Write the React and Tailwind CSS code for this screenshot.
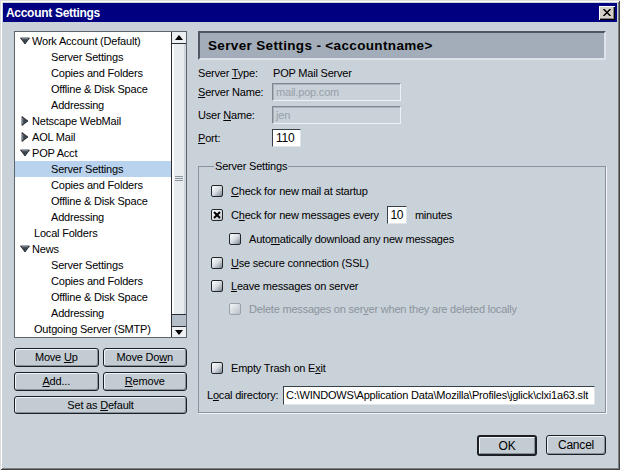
import React from "react";

const U = ({ children }) => <span className="underline underline-offset-[1px]">{children}</span>;

function Arrow({ dir }) {
  if (dir === "down")
    return (
      <svg width="10" height="8" viewBox="0 0 10 8" className="shrink-0">
        <path d="M0.5 1 L9.5 1 L5 7 Z" fill="#3c444c" stroke="#1e2226" strokeWidth="0.8" />
        <path d="M1.8 1.7 L8.2 1.7" stroke="#9aa4ae" strokeWidth="0.8" />
      </svg>
    );
  return (
    <svg width="8" height="10" viewBox="0 0 8 10" className="shrink-0">
      <path d="M1 0.5 L7 5 L1 9.5 Z" fill="#3c444c" stroke="#1e2226" strokeWidth="0.8" />
      <path d="M1.7 1.8 L1.7 8.2" stroke="#9aa4ae" strokeWidth="0.8" />
    </svg>
  );
}

const tree = [
  { t: "Work Account (Default)", p: "down" },
  { t: "Server Settings" },
  { t: "Copies and Folders" },
  { t: "Offline & Disk Space" },
  { t: "Addressing" },
  { t: "Netscape WebMail", p: "right" },
  { t: "AOL Mail", p: "right" },
  { t: "POP Acct", p: "down" },
  { t: "Server Settings", sel: true },
  { t: "Copies and Folders" },
  { t: "Offline & Disk Space" },
  { t: "Addressing" },
  { t: "Local Folders", p: "none" },
  { t: "News", p: "down" },
  { t: "Server Settings" },
  { t: "Copies and Folders" },
  { t: "Offline & Disk Space" },
  { t: "Addressing" },
  { t: "Outgoing Server (SMTP)", p: "none" },
];

function TreeRow({ item }) {
  const bg = item.sel ? "bg-[#b9d3ee]" : "";
  if (item.p === "down" || item.p === "right") {
    return (
      <div className={`h-[16px] flex items-center ${bg}`}>
        <div className="w-[17px] flex justify-center pl-[2px]">
          <Arrow dir={item.p} />
        </div>
        <span className="whitespace-nowrap">{item.t}</span>
      </div>
    );
  }
  if (item.p === "none") {
    return (
      <div className={`h-[16px] flex items-center pl-[19px] ${bg}`}>
        <span className="whitespace-nowrap">{item.t}</span>
      </div>
    );
  }
  return (
    <div className={`h-[16px] flex items-center pl-[36px] ${bg}`}>
      <span className="whitespace-nowrap">{item.t}</span>
    </div>
  );
}

function Btn({ children, className = "" }) {
  return (
    <div
      className={`h-[19px] flex items-center justify-center rounded-[3px] border border-[#1c2024] bg-[#c3cbd3] shadow-[inset_1px_1px_0_#f2f5f7,inset_-1px_-1px_0_#88919a] ${className}`}
    >
      <span className="whitespace-pre">{children}</span>
    </div>
  );
}

function Check({ checked, disabled }) {
  if (disabled)
    return (
      <span className="w-[12px] h-[12px] shrink-0 rounded-[2px] border border-[#9aa2aa] bg-gradient-to-br from-[#f4f6f8] to-[#b8c0c8]" />
    );
  if (checked)
    return (
      <span className="w-[12px] h-[12px] shrink-0 rounded-[2px] border border-[#22262a] bg-gradient-to-br from-white to-[#c0c6cc] flex items-center justify-center">
        <svg width="8" height="8" viewBox="0 0 8 8">
          <path d="M1 1 L7 7 M7 1 L1 7" stroke="#000" strokeWidth="2" />
        </svg>
      </span>
    );
  return (
    <span className="w-[12px] h-[12px] shrink-0 rounded-[2px] border border-[#22262a] bg-gradient-to-br from-white via-[#d8dde2] to-[#7e8893]" />
  );
}

export default function App() {
  return (
    <div className="w-[620px] h-[470px] bg-[#c9d1d9] p-[3px] flex flex-col text-[11px] leading-none tracking-[-0.2px] text-black font-['Liberation_Sans',Arial,sans-serif] shadow-[inset_1px_1px_0_#dcdcdc,inset_-1px_-1px_0_#404040,inset_2px_2px_0_#ffffff,inset_-2px_-2px_0_#808080]">
      {/* Title bar */}
      <div className="h-[19px] bg-[#000080] flex items-center justify-between pl-[3px] pr-[2px]">
        <span className="text-white font-bold text-[12px] tracking-[-0.3px]">Account Settings</span>
        <div className="w-[16px] h-[14px] bg-[#d4d0c8] flex items-center justify-center shadow-[inset_1px_1px_0_#ffffff,inset_-1px_-1px_0_#000000,inset_-2px_-2px_0_#808080]">
          <svg width="8" height="7" viewBox="0 0 8 7">
            <path d="M0.5 0 L7.5 7 M7.5 0 L0.5 7" stroke="#000" strokeWidth="1.5" />
          </svg>
        </div>
      </div>

      {/* Body */}
      <div className="flex pl-[11px] pt-[9px]">
        {/* Left column */}
        <div className="w-[173px] flex flex-col">
          <div className="h-[307px] border border-[#5c646c] bg-white flex">
            <div className="flex-1 pt-[1px] overflow-hidden">
              {tree.map((it, i) => (
                <TreeRow key={i} item={it} />
              ))}
            </div>
            <div className="w-[15px] flex flex-col border-l border-[#2a2e32]">
              <div className="h-[12px] bg-[#eef1f4] border-b border-[#2a2e32] flex items-center justify-center">
                <svg width="8" height="5" viewBox="0 0 8 5">
                  <path d="M0 5 L4 0 L8 5 Z" fill="#000" />
                </svg>
              </div>
              <div className="flex-1 bg-[#e8ecef] border-b border-[#2a2e32] flex items-center justify-center shadow-[inset_2px_0_0_#ffffff,inset_-2px_0_0_#ccd3da]">
                <svg width="8" height="6" viewBox="0 0 8 6">
                  <path d="M0 0.5 H8 M0 2.5 H8 M0 4.5 H8" stroke="#8d969f" strokeWidth="1" />
                </svg>
              </div>
              <div className="h-[11px] bg-[#b4bec8]" />
              <div className="h-[11px] bg-[#eef1f4] border-t border-[#2a2e32] flex items-center justify-center">
                <svg width="8" height="5" viewBox="0 0 8 5">
                  <path d="M0 0 L4 5 L8 0 Z" fill="#000" />
                </svg>
              </div>
            </div>
          </div>
          <div className="mt-[10px] grid grid-cols-2 gap-x-[4px] gap-y-[5px]">
            <Btn>
              Move <U>U</U>p
            </Btn>
            <Btn>
              Move Do<U>w</U>n
            </Btn>
            <Btn>
              <U>A</U>dd...
            </Btn>
            <Btn>
              <U>R</U>emove
            </Btn>
            <Btn className="col-span-2 !h-[18px]">
              Set as <U>D</U>efault
            </Btn>
          </div>
        </div>

        {/* Right column */}
        <div className="ml-[11px] w-[408px] flex flex-col">
          <div className="h-[29px] bg-[#a3adb9] border-2 border-[#4f5862] border-b-[#dde3e8] border-r-[#dde3e8] flex items-center pl-[8px]">
            <span className="font-bold text-[13.5px] tracking-[0.35px]">Server Settings - &lt;accountname&gt;</span>
          </div>

          <div className="mt-[4px] flex flex-col">
            <div className="h-[18px] flex items-center">
              <span className="w-[75px]">
                Server <U>T</U>ype:
              </span>
              <span>POP Mail Server</span>
            </div>
            <div className="mt-[1px] h-[18px] flex items-center">
              <span className="w-[74px]">
                <U>S</U>erver Name:
              </span>
              <div className="w-[129px] h-[18px] border border-[#7e8790] border-b-[#eef1f3] border-r-[#eef1f3] shadow-[inset_1px_1px_0_#a9b2bb] flex items-center pl-[3px] text-[#98a0a8]">
                mail.pop.com
              </div>
            </div>
            <div className="mt-[5px] h-[18px] flex items-center">
              <span className="w-[74px]">
                User <U>N</U>ame:
              </span>
              <div className="w-[129px] h-[18px] border border-[#7e8790] border-b-[#eef1f3] border-r-[#eef1f3] shadow-[inset_1px_1px_0_#a9b2bb] flex items-center pl-[3px] text-[#98a0a8]">
                jen
              </div>
            </div>
            <div className="mt-[5px] h-[18px] flex items-center">
              <span className="w-[74px]">
                <U>P</U>ort:
              </span>
              <div className="w-[29px] h-[18px] bg-white border border-[#3a4048] border-b-[#dfe4e8] border-r-[#dfe4e8] flex items-center pl-[3px] text-[12px]">
                110
              </div>
            </div>
          </div>

          <fieldset className="mt-[13px] h-[253px] border border-[#8a939c] shadow-[1px_1px_0_#f4f6f8] pl-[8px] flex flex-col">
            <legend className="ml-[7px] px-[1px] leading-[13px]">Server Settings</legend>
            <div className="mt-[6px] h-[24px] flex items-center gap-[8px] ml-[4px]">
              <Check />
              <span>
                <U>C</U>heck for new mail at startup
              </span>
            </div>
            <div className="h-[24px] flex items-center gap-[8px] ml-[4px]">
              <Check checked />
              <span>
                C<U>h</U>eck for new messages every
              </span>
              <div className="w-[20px] h-[18px] bg-white border border-[#3a4048] border-b-[#dfe4e8] border-r-[#dfe4e8] flex items-center justify-center text-[12px]">
                10
              </div>
              <span>minutes</span>
            </div>
            <div className="h-[24px] flex items-center gap-[8px] ml-[22px]">
              <Check />
              <span>
                Auto<U>m</U>atically download any new messages
              </span>
            </div>
            <div className="h-[24px] flex items-center gap-[8px] ml-[4px]">
              <Check />
              <span>
                <U>U</U>se secure connection (SSL)
              </span>
            </div>
            <div className="h-[22px] flex items-center gap-[8px] ml-[4px]">
              <Check />
              <span>
                <U>L</U>eave messages on server
              </span>
            </div>
            <div className="h-[24px] flex items-center gap-[8px] ml-[22px] text-[#8c949c]">
              <Check disabled />
              <span>
                Delete messages on ser<U>v</U>er when they are deleted locally
              </span>
            </div>
            <div className="mt-[35px] h-[24px] flex items-center gap-[8px] ml-[4px]">
              <Check />
              <span>
                Empty Trash on E<U>x</U>it
              </span>
            </div>
            <div className="mt-[6px] h-[19px] flex items-center">
              <span className="w-[76px]">
                L<U>o</U>cal directory:
              </span>
              <div className="w-[312px] h-[19px] bg-white border border-[#3a4048] border-b-[#dfe4e8] border-r-[#dfe4e8] flex items-center pl-[2px] whitespace-nowrap overflow-hidden">
                C:\WINDOWS\Application Data\Mozilla\Profiles\jglick\clxi1a63.slt
              </div>
            </div>
          </fieldset>
        </div>
      </div>

      {/* Footer */}
      <div className="mt-auto flex justify-end gap-[9px] pr-[11px] pb-[11px]">
        <div className="w-[60px] h-[21px] flex items-center justify-center rounded-[3px] border-2 border-[#1c2024] bg-[#c3cbd3] shadow-[inset_1px_1px_0_#f2f5f7,inset_-1px_-1px_0_#88919a] text-[12px]">
          OK
        </div>
        <div className="w-[60px] h-[20px] flex items-center justify-center rounded-[3px] border border-[#1c2024] bg-[#c3cbd3] shadow-[inset_1px_1px_0_#f2f5f7,inset_-1px_-1px_0_#88919a] text-[12px]">
          Cancel
        </div>
      </div>
    </div>
  );
}
